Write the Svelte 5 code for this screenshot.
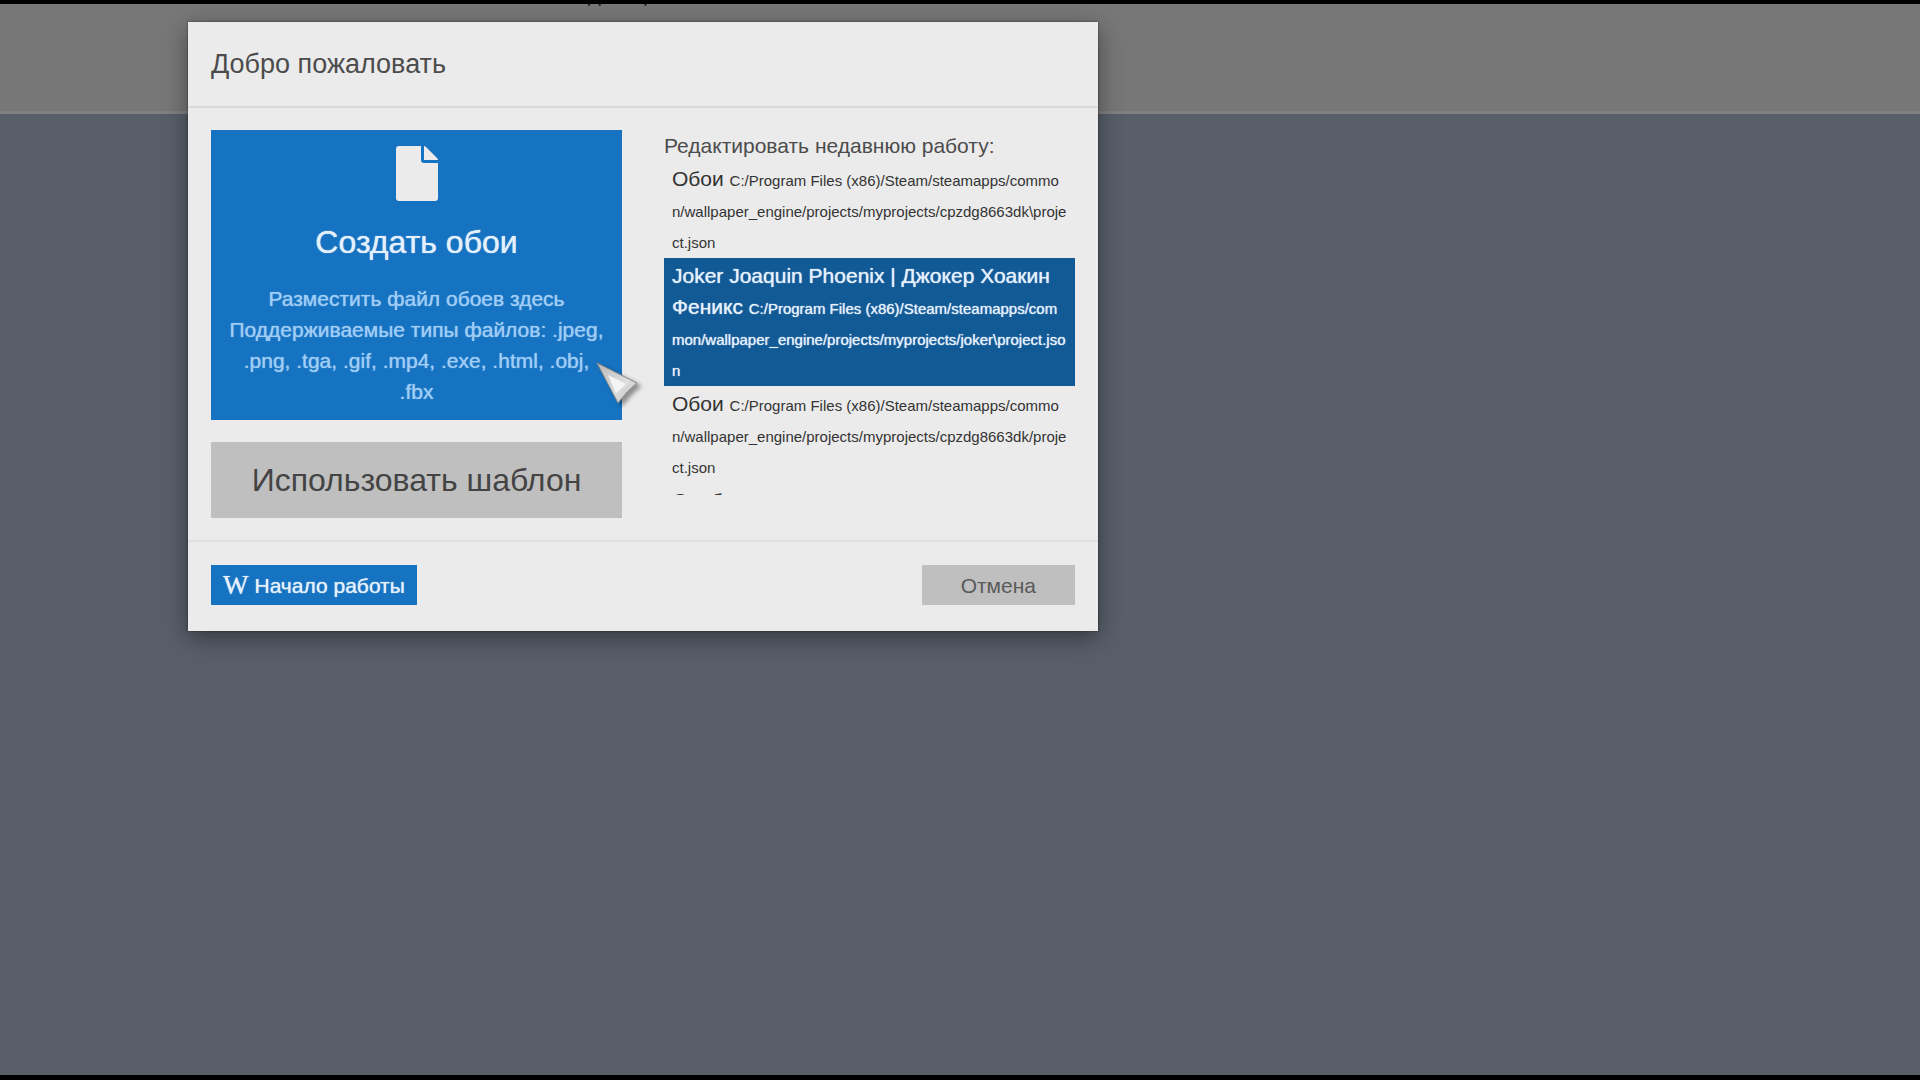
<script>
	let pageTitle = 'Джокер';
	let fileTypes = ['.jpeg', '.png', '.tga', '.gif', '.mp4', '.exe', '.html', '.obj', '.fbx'];
	let base = 'C:/Program Files (x86)/Steam/steamapps/common/wallpaper_engine/projects/myprojects/';

	let recent = [
		{ title: 'Обои', path: base + 'cpzdg8663dk\\project.json' },
		{ title: 'Joker Joaquin Phoenix | Джокер Хоакин Феникс', path: base + 'joker\\project.json' },
		{ title: 'Обои', path: base + 'cpzdg8663dk/project.json' },
		{ title: 'Особо', path: '' }
	];
	let selected = $state(1);
</script>

<div class="page">
	<header class="topbar">
		<span class="page-title">{pageTitle}</span>
	</header>

	<div class="workspace">
		<div class="modal" role="dialog" aria-labelledby="modal-title">
			<div class="modal-header">
				<h1 id="modal-title">Добро пожаловать</h1>
			</div>

			<div class="modal-body">
				<div class="column actions">
					<button class="create">
						<svg class="file" viewBox="0 0 42 55" aria-hidden="true">
							<path d="M3 0H25V14Q25 17 28 17H42V52Q42 55 39 55H3Q0 55 0 52V3Q0 0 3 0Z" />
							<path d="M28 0Q29 0 30 1L41 12Q42 13 42 14H28Z" />
						</svg>
						<span class="create-title">Создать обои</span>
						<span class="create-hint">Разместить файл обоев здесь<br />Поддерживаемые типы файлов: {fileTypes.join(', ')}</span>
					</button>
					<button class="template">Использовать шаблон</button>

					<svg class="cursor" viewBox="0 0 50 50" aria-hidden="true">
						<defs>
							<linearGradient id="metal" x1="0" y1="0" x2="1" y2="1">
								<stop offset="0" stop-color="#b8b8b8" />
								<stop offset="0.6" stop-color="#dedede" />
								<stop offset="1" stop-color="#b9b9b9" />
							</linearGradient>
						</defs>
						<path d="M3 3L43 23Q33 31 24 43Z" fill="url(#metal)" stroke="#888" stroke-width="1" />
						<path d="M14 15L32 24L22 33Z" fill="#f5f5f5" />
					</svg>
				</div>

				<div class="column">
					<h2>Редактировать недавнюю работу:</h2>
					<ul class="recent">
						{#each recent as item, i}
							<li>
								<button class="item" class:selected={selected === i} onclick={() => (selected = i)}>
									{item.title} <small>{item.path}</small>
								</button>
							</li>
						{/each}
					</ul>
				</div>
			</div>

			<div class="modal-footer">
				<button class="start">
					<span class="wiki" aria-hidden="true">W</span>
					<span>Начало работы</span>
				</button>
				<button class="cancel">Отмена</button>
			</div>
		</div>
	</div>
</div>

<style>
	:global(body) {
		margin: 0;
		background: #000;
	}
	.page {
		box-sizing: border-box;
		display: flex;
		flex-direction: column;
		height: 100vh;
		padding: 4px 0 5px;
		font-family: "Liberation Sans", Arial, sans-serif;
		font-size: 21px;
		line-height: 31px;
		color: #4c4c4c;
	}
	.topbar {
		box-sizing: border-box;
		flex: none;
		height: 110px;
		padding-left: 588px;
		border-bottom: 3px solid #808080;
		background: #777;
		overflow: hidden;
	}
	.page-title {
		display: block;
		margin-top: -24px;
		font-size: 19px;
		color: #222;
	}
	.workspace {
		flex: 1;
		background: #585f69;
	}

	/* modal sits over the top bar */
	.modal {
		position: relative;
		width: 910px;
		max-width: 100%;
		margin: -92px 0 0 188px;
		background: #ebebeb;
		box-shadow: 0 7px 23px rgba(0, 0, 0, 0.4), 0 0 2px rgba(0, 0, 0, 0.5);
	}
	.modal-header {
		padding: 23px;
		border-bottom: 2px solid #d9d9d9;
	}
	h1 {
		margin: 0;
		font-size: 27px;
		font-weight: normal;
		line-height: 38px;
	}
	.modal-body {
		display: grid;
		grid-template-columns: 1fr 1fr;
		gap: 42px;
		padding: 22px 23px;
	}
	.column {
		position: relative;
		min-width: 0;
	}
	.actions {
		display: flex;
		flex-direction: column;
		gap: 22px;
	}
	button {
		border: 0;
		padding: 0;
		font: inherit;
		color: inherit;
		cursor: pointer;
	}
	.create {
		display: flex;
		flex-direction: column;
		align-items: center;
		padding: 16px 16px 13px;
		background: #1673c1;
		color: #e4f1fc;
	}
	.file {
		width: 42px;
		height: 55px;
		fill: #ebebeb;
	}
	.create-title {
		margin: 22px 0;
		font-size: 32px;
		line-height: 38px;
	}
	.create-hint {
		color: #9fcdf5;
	}
	.create-title,
	.create-hint,
	.start,
	.selected {
		text-shadow: 0 0 1px currentColor;
	}
	.template {
		height: 76px;
		background: #bfbfbf;
		font-size: 32px;
		color: #444;
	}
	.cursor {
		position: absolute;
		left: 383px;
		top: 230px;
		width: 50px;
		height: 50px;
		filter: drop-shadow(4px 3px 2px rgba(0, 0, 0, 0.4));
		pointer-events: none;
	}
	h2 {
		margin: 0;
		font-size: 21px;
		font-weight: normal;
	}
	.recent {
		height: 334px;
		margin: 0;
		padding: 0;
		list-style: none;
		overflow: hidden;
	}
	.item {
		display: block;
		width: 100%;
		padding: 2px 8px;
		background: none;
		text-align: left;
		word-break: break-all;
		color: #333;
	}
	.item small {
		font-size: 15px;
		line-height: 15px;
	}
	.item.selected {
		background: #125a96;
		color: #e4f1fc;
	}
	.modal-footer {
		display: flex;
		justify-content: space-between;
		padding: 23px 23px 26px;
		border-top: 2px solid #e0e0e0;
	}
	.start {
		display: flex;
		align-items: center;
		gap: 6px;
		height: 40px;
		padding: 0 12px;
		background: #1673c1;
		color: #e4f1fc;
	}
	.wiki {
		font-family: "Liberation Serif", serif;
		font-size: 27px;
	}
	.cancel {
		height: 40px;
		padding: 0 39px;
		background: #bfbfbf;
		color: #5a5a5a;
	}
</style>
